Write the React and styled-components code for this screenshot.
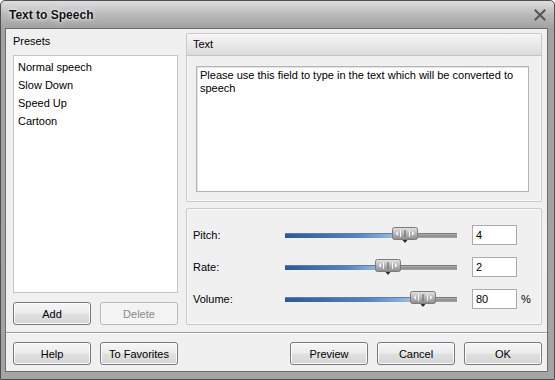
import React from 'react';
import styled, {createGlobalStyle} from 'styled-components';

const GlobalStyle = createGlobalStyle`
  html, body {
    margin: 0;
    padding: 0;
    background: #fff;
  }
  body {
    font-family: "Liberation Sans", Arial, sans-serif;
    font-size: 11px;
    color: #000;
  }
`;

const Window = styled.div`
  width: 555px;
  height: 380px;
  box-sizing: border-box;
  border: 1px solid #4f4f4f;
  border-radius: 5px 5px 0 0;
  background: linear-gradient(#dedede 0px, #b8b8b8 14px, #a2a2a2 27px, #a4a4a4 100%);
  display: flex;
  flex-direction: column;
  padding: 0 6px 7px 4px;
`;

const TitleBar = styled.div`
  height: 27px;
  display: flex;
  align-items: center;
  justify-content: space-between;
  padding: 0 2px 0 4px;
`;

const Title = styled.div`
  font-weight: bold;
  font-size: 12px;
  color: #111;
  text-shadow: 0 0 5px rgba(255, 255, 255, 0.9), 0 0 2px rgba(255, 255, 255, 0.9);
`;

const CloseIcon = styled.svg`
  width: 12px;
  height: 12px;
  margin-top: 1px;
`;

const Body = styled.div`
  flex: 1;
  background: #f0f0f0;
  border: 1px solid #6d6d6d;
  display: flex;
  flex-direction: column;
`;

const Main = styled.div`
  display: flex;
  gap: 8px;
  padding: 4px 5px 0 7px;
  height: 292px;
`;

const LeftColumn = styled.div`
  width: 165px;
  display: flex;
  flex-direction: column;
`;

const SectionLabel = styled.div`
  line-height: 16px;
  height: 16px;
  margin-bottom: 6px;
`;

const PresetList = styled.div`
  flex: 1;
  background: #fff;
  border: 1px solid #c5c5c5;
  padding: 2px 4px;
`;

const PresetItem = styled.div`
  height: 18px;
  line-height: 18px;
  color: #000;
`;

const ButtonRow = styled.div`
  display: flex;
  gap: 9px;
  margin-top: 9px;
`;

const Button = styled.button`
  width: 78px;
  height: 23px;
  box-sizing: border-box;
  font-family: "Liberation Sans", Arial, sans-serif;
  font-size: 11px;
  color: ${p => (p.disabled ? '#8a8a8a' : '#000')};
  border: 1px solid ${p => (p.disabled ? '#b8b8b8' : '#7a7a7a')};
  border-radius: 3px;
  background: ${p =>
    p.disabled
      ? '#f3f3f3'
      : 'linear-gradient(#f6f6f6 0%, #ececec 48%, #e0e0e0 52%, #d6d6d6 100%)'};
  box-shadow: inset 0 0 0 1px ${p => (p.disabled ? '#f8f8f8' : '#fcfcfc')};
  padding: 0;
`;

const RightColumn = styled.div`
  flex: 1;
  display: flex;
  flex-direction: column;
  gap: 6px;
`;

const Panel = styled.div`
  border: 1px solid #c9c9c9;
  border-radius: 2px;
  background: #f0f0f0;
  box-shadow: inset 0 0 0 1px #fafafa;
  display: flex;
  flex-direction: column;
`;

const TextPanel = styled(Panel)`
  height: 169px;
  box-sizing: border-box;
`;

const PanelHeader = styled.div`
  height: 21px;
  line-height: 21px;
  padding-left: 6px;
  background: linear-gradient(#f6f6f6, #dcdcdc);
  border-bottom: 1px solid #c4c4c4;
`;

const TextArea = styled.div`
  flex: 1;
  margin: 10px 12px 9px 9px;
  background: #fff;
  border: 1px solid #b5b5b5;
  box-shadow: inset 1px 1px 0 #e3e3e3;
  padding: 2px 3px;
  line-height: 13px;
`;

const SliderPanel = styled(Panel)`
  flex: 1;
  padding: 16px 0 0 6px;
  gap: 12px;
`;

const SliderRow = styled.div`
  display: grid;
  grid-template-columns: 92px 172px 60px auto;
  align-items: center;
  height: 20px;
`;

const RowLabel = styled.div``;

const TrackWrap = styled.div`
  position: relative;
  height: 20px;
  display: flex;
  align-items: center;
`;

const Track = styled.div`
  width: 100%;
  height: 5px;
  background: linear-gradient(#b4b4b4, #8a8a8a 50%, #a8a8a8);
  border-top: 1px solid #7a7a7a;
  box-sizing: border-box;
`;

const Fill = styled.div`
  height: 100%;
  background: linear-gradient(90deg, #2a5a98 0%, #4f84c6 60%, #a6cdf5 100%);
`;

const Thumb = styled.svg`
  position: absolute;
  top: 2px;
  width: 26px;
  height: 17px;
`;

const ValueInput = styled.div`
  margin-left: 15px;
  width: 45px;
  height: 20px;
  box-sizing: border-box;
  background: #fff;
  border: 1px solid #acacac;
  padding: 2px 3px;
  line-height: 14px;
  font-size: 11px;
`;

const Unit = styled.div`
  margin-left: 4px;
`;

const Separator = styled.div`
  margin-top: 7px;
  border-top: 1px solid #a0a0a0;
  border-bottom: 1px solid #fff;
`;

const Footer = styled.div`
  display: flex;
  gap: 9px;
  padding: 8px 5px 0 7px;
`;

const Spacer = styled.div`
  flex: 1;
`;

const SliderThumb = ({left}) => (
  <Thumb style={{left: left - 13}} viewBox="0 0 26 17">
    <defs>
      <linearGradient id="tg" x1="0" y1="0" x2="0" y2="1">
        <stop offset="0" stopColor="#e6e6e6" />
        <stop offset="0.5" stopColor="#b6b6b6" />
        <stop offset="1" stopColor="#8c8c8c" />
      </linearGradient>
    </defs>
    <rect x="0.5" y="0.5" width="25" height="12" rx="2" fill="url(#tg)" stroke="#7b7b7b" />
    <path d="M6 4 L3.5 6.5 L6 9 Z" fill="#f2f2f2" />
    <path d="M20 4 L22.5 6.5 L20 9 Z" fill="#f2f2f2" />
    <rect x="8" y="3" width="1" height="7" fill="#f4f4f4" />
    <rect x="12.5" y="3" width="1" height="7" fill="#5e5e5e" />
    <rect x="17" y="3" width="1" height="7" fill="#f4f4f4" />
    <path d="M10.5 13 L15.5 13 L13 16 Z" fill="#2b2b2b" />
  </Thumb>
);

const Slider = ({percent}) => {
  const thumbLeft = Math.round((172 * percent) / 100);
  return (
    <TrackWrap>
      <Track>
        <Fill style={{width: thumbLeft}} />
      </Track>
      <SliderThumb left={thumbLeft} />
    </TrackWrap>
  );
};

const sliders = [
  {label: 'Pitch:', value: '4', percent: 70},
  {label: 'Rate:', value: '2', percent: 60},
  {label: 'Volume:', value: '80', percent: 80, unit: '%'},
];

const presets = ['Normal speech', 'Slow Down', 'Speed Up', 'Cartoon'];

const App = () => (
  <>
    <GlobalStyle />
    <Window>
      <TitleBar>
        <Title>Text to Speech</Title>
        <CloseIcon viewBox="0 0 12 12">
          <path d="M1.5 1.5 L10.5 10.5 M10.5 1.5 L1.5 10.5" stroke="#555" strokeWidth="2" strokeLinecap="square" />
        </CloseIcon>
      </TitleBar>
      <Body>
        <Main>
          <LeftColumn>
            <SectionLabel>Presets</SectionLabel>
            <PresetList>
              {presets.map(p => (
                <PresetItem key={p}>{p}</PresetItem>
              ))}
            </PresetList>
            <ButtonRow>
              <Button>Add</Button>
              <Button disabled>Delete</Button>
            </ButtonRow>
          </LeftColumn>
          <RightColumn>
            <TextPanel>
              <PanelHeader>Text</PanelHeader>
              <TextArea>Please use this field to type in the text which will be converted to speech</TextArea>
            </TextPanel>
            <SliderPanel>
              {sliders.map(s => (
                <SliderRow key={s.label}>
                  <RowLabel>{s.label}</RowLabel>
                  <Slider percent={s.percent} />
                  <ValueInput>{s.value}</ValueInput>
                  {s.unit && <Unit>{s.unit}</Unit>}
                </SliderRow>
              ))}
            </SliderPanel>
          </RightColumn>
        </Main>
        <Separator />
        <Footer>
          <Button>Help</Button>
          <Button>To Favorites</Button>
          <Spacer />
          <Button>Preview</Button>
          <Button>Cancel</Button>
          <Button>OK</Button>
        </Footer>
      </Body>
    </Window>
  </>
);

export default App;
